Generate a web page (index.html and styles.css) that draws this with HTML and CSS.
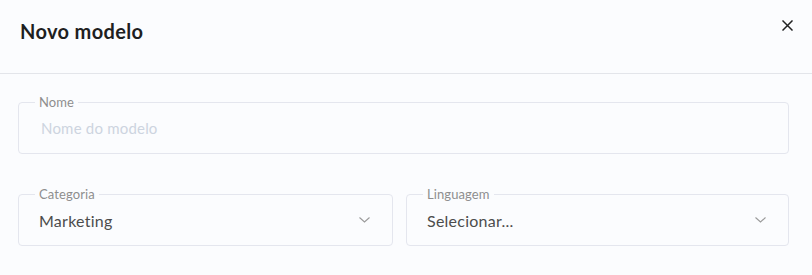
FILE: index.html
```html
<!DOCTYPE html>
<html lang="pt">
<head>
<meta charset="utf-8">
<title>Novo modelo</title>
<link rel="stylesheet" href="styles.css">
</head>
<body>
<div class="modal">
  <header class="modal-header">
    <h1 class="modal-title">Novo modelo</h1>
    <button class="close" aria-label="Fechar">
      <svg width="11" height="11" viewBox="0 0 11 11"><path d="M1 1 L10 10 M10 1 L1 10" stroke="#222" stroke-width="1.5" fill="none" stroke-linecap="square"/></svg>
    </button>
  </header>
  <div class="modal-body">
    <fieldset class="field">
      <legend class="field-label">Nome</legend>
      <div class="field-control"><span class="placeholder">Nome do modelo</span></div>
    </fieldset>
    <div class="row">
      <fieldset class="field">
        <legend class="field-label">Categoria</legend>
        <div class="field-control"><span class="value">Marketing</span>
          <svg class="chev" width="11" height="6" viewBox="0 0 11 6"><path d="M0.5 0.5 L5.5 5 L10.5 0.5" stroke="#9a9a9a" stroke-width="1.1" fill="none"/></svg>
        </div>
      </fieldset>
      <fieldset class="field">
        <legend class="field-label">Linguagem</legend>
        <div class="field-control"><span class="value">Selecionar...</span>
          <svg class="chev" width="11" height="6" viewBox="0 0 11 6"><path d="M0.5 0.5 L5.5 5 L10.5 0.5" stroke="#9a9a9a" stroke-width="1.1" fill="none"/></svg>
        </div>
      </fieldset>
    </div>
  </div>
</div>
</body>
</html>
```

FILE: styles.css
```css
html, body {
  margin: 0;
  padding: 0;
  background: #fbfcfe;
}
body {
  font-family: Lato, "Noto Sans", sans-serif;
  width: 812px;
  height: 275px;
  overflow: hidden;
}
.modal-header {
  height: 74px;
  border-bottom: 1px solid #e3e5ea;
  display: flex;
  align-items: center;
  justify-content: space-between;
  padding: 0 19px 12px 20px;
  box-sizing: border-box;
}
.modal-title {
  margin: 0;
  font-size: 20px;
  font-weight: 700;
  color: #1f1f1f;
  letter-spacing: 0.35px;
}
.close {
  border: 0;
  background: none;
  padding: 0;
  margin: 0;
  width: 11px;
  height: 11px;
  display: flex;
  position: relative;
  top: -5px;
}
.modal-body {
  padding: 20px 23px 0 18px;
}
.field {
  margin: 0;
  padding: 0 22px 7px 20px;
  border: 1px solid #e4e6ee;
  border-radius: 4px;
  min-width: 0;
}
.field-label {
  margin-left: -4px;
  padding: 0 4px;
  font-size: 13px;
  line-height: 16px;
  color: #8e8e8e;
  letter-spacing: 0.1px;
}
.field-control {
  height: 36px;
  display: flex;
  align-items: center;
  justify-content: space-between;
}
.placeholder {
  font-size: 15px;
  color: #cdd4e0;
  margin-left: 2px;
  letter-spacing: 0.2px;
}
.value {
  font-size: 16px;
  color: #4c4c4c;
  letter-spacing: 0.25px;
}
.chev {
  display: block;
}
.row {
  margin-top: 32px;
  display: grid;
  grid-template-columns: 375fr 383fr;
  column-gap: 13px;
}
```
